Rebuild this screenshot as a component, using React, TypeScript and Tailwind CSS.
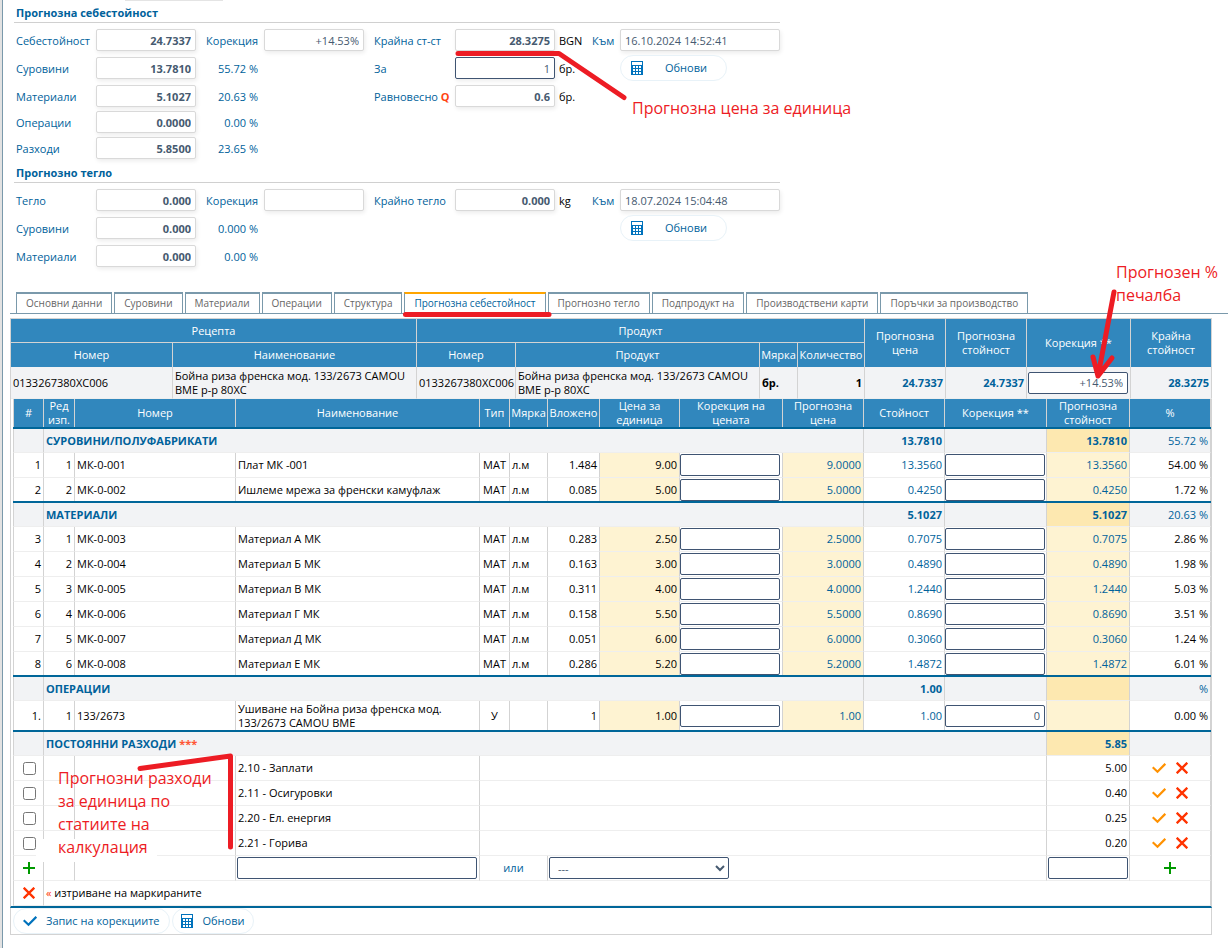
import React from "react";

const INK = "text-[#00629b]";

function CalcIcon() {
  return (
    <svg width="12" height="14" viewBox="0 0 12 14" shapeRendering="crispEdges" aria-hidden="true" className="shrink-0">
      <path fill="#0072bc" d="M0 0h12v14H0z" />
      <path fill="#fff" d="M1 1h10v3H1zM2 5h2v2H2zM5 5h2v2H5zM8 5h2v2H8zM2 8h2v2H2zM5 8h2v2H5zM8 8h2v2H8zM2 11h2v2H2zM5 11h2v2H5zM8 11h2v2H8z" />
    </svg>
  );
}

function CheckIcon({ color }: { color: string }) {
  return (
    <svg width="14" height="12" viewBox="0 0 14 12" aria-hidden="true" className="shrink-0">
      <path d="M.7 5.2 5.5 9.700 13.300 1.900" fill="none" stroke={color} strokeWidth="2.2" />
    </svg>
  );
}

function CrossIcon() {
  return (
    <svg width="12" height="12" viewBox="0 0 12 12" aria-hidden="true">
      <path d="M.7.7 11.3 11.3M11.3.7.7 11.3" fill="none" stroke="#ff3300" strokeWidth="2.3" />
    </svg>
  );
}

function PlusIcon() {
  return (
    <svg width="12" height="12" viewBox="0 0 12 12" aria-hidden="true">
      <path d="M6 0v12M0 6h12" fill="none" stroke="#009900" strokeWidth="2" />
    </svg>
  );
}

type FieldProps = { id: string; value?: string; bold?: boolean; strong?: boolean; left?: boolean };

function Field({ id, value = "", bold, strong, left }: FieldProps) {
  return (
    <input
      id={id}
      defaultValue={value}
      className={`block h-[22px] w-full rounded-[2px] border bg-white px-1 text-[#465a70] shadow-[1px_2px_4px_rgba(0,0,0,0.08)] ${
        strong ? "border-[#3f5472]" : "border-[#d9d9d9]"
      } ${bold ? "font-bold" : ""} ${left ? "text-left" : "text-right"}`}
    />
  );
}

function RefreshButton() {
  return (
    <button
      type="button"
      className={`flex h-[26px] w-[107px] items-center gap-[22px] rounded-full border border-[#e8f2f8] bg-white px-2.5 leading-[14px] ${INK}`}
    >
      <CalcIcon />
      Обнови
    </button>
  );
}

const FORM_ROW =
  "grid h-[22px] grid-cols-[80px_100px_68px_100px_91px_100px_37px_28px_160px] grid-rows-[22px] items-center text-[#00629b]";

type FormRowProps = {
  id: string;
  label: string;
  value: string;
  pct?: string;
  children?: React.ReactNode;
};

function FormRow({ id, label, value, pct, children }: FormRowProps) {
  return (
    <div className={FORM_ROW}>
      <label htmlFor={id}>{label}</label>
      <Field id={id} value={value} bold />
      {pct !== undefined && <span className="pr-1.5 text-right">{pct}</span>}
      {children}
    </div>
  );
}

function SectionTitle({ children }: { children: React.ReactNode }) {
  return <h2 className="h-[19px] w-[766px] border-b border-[#d0d0d0] pl-0.5 leading-[17px] font-bold text-[#00629b]">{children}</h2>;
}

const TABS = [
  "Основни данни",
  "Суровини",
  "Материали",
  "Операции",
  "Структура",
  "Прогнозна себестойност",
  "Прогнозно тегло",
  "Подпродукт на",
  "Производствени карти",
  "Поръчки за производство",
];

const TH = "border-r border-[#d3d3d3] bg-[#3187bd] p-0 text-center font-medium text-white";
const TD = "border-r border-b border-r-[#d3d3d3] border-b-[#eeeeee] p-0 px-0.5";
const TD_END = "border-r border-r-[#d3d3d3] p-0 px-0.5";
const TD_FIRST = "border-l border-l-[#d3d3d3]";

function Rule() {
  return (
    <tr aria-hidden="true">
      <td colSpan={14} className="h-0.5 bg-[#006699] p-0" />
    </tr>
  );
}

function Blank({ label, value = "" }: { label: string; value?: string }) {
  return (
    <input
      aria-label={label}
      defaultValue={value}
      className="block h-[22px] w-[100px] rounded-[2px] border border-[#3f5472] bg-white px-1 text-right text-[#465a70]"
    />
  );
}

type Item = {
  n: string;
  row: string;
  code: string;
  name: string;
  kind: string;
  unit: string;
  qty: string;
  price: string;
  forecast: string;
  cost: string;
  corr?: string;
  total: string;
  pct: string;
};

const mat = (n: string, row: string, code: string, name: string, qty: string, price: string, cost: string, pct: string): Item => ({
  n,
  row,
  code,
  name,
  kind: "МАТ",
  unit: "л.м",
  qty,
  price,
  forecast: price + "00",
  cost,
  total: cost,
  pct,
});

const RAW: Item[] = [
  mat("1", "1", "МК-0-001", "Плат МК -001", "1.484", "9.00", "13.3560", "54.00 %"),
  mat("2", "2", "МК-0-002", "Ишлеме мрежа за френски камуфлаж", "0.085", "5.00", "0.4250", "1.72 %"),
];

const MATERIALS: Item[] = [
  mat("3", "1", "МК-0-003", "Материал А МК", "0.283", "2.50", "0.7075", "2.86 %"),
  mat("4", "2", "МК-0-004", "Материал Б МК", "0.163", "3.00", "0.4890", "1.98 %"),
  mat("5", "3", "МК-0-005", "Материал В МК", "0.311", "4.00", "1.2440", "5.03 %"),
  mat("6", "4", "МК-0-006", "Материал Г МК", "0.158", "5.50", "0.8690", "3.51 %"),
  mat("7", "5", "МК-0-007", "Материал Д МК", "0.051", "6.00", "0.3060", "1.24 %"),
  mat("8", "6", "МК-0-008", "Материал Е МК", "0.286", "5.20", "1.4872", "6.01 %"),
];

const OPERATIONS: Item[] = [
  {
    n: "1.",
    row: "1",
    code: "133/2673",
    name: "Ушиване на Бойна риза френска мод. 133/2673 CAMOU BME",
    kind: "У",
    unit: "",
    qty: "1",
    price: "1.00",
    forecast: "1.00",
    cost: "1.00",
    corr: "0",
    total: "",
    pct: "0.00 %",
  },
];

const EXPENSES = [
  ["2.10 - Заплати", "5.00"],
  ["2.11 - Осигуровки", "0.40"],
  ["2.20 - Ел. енергия", "0.25"],
  ["2.21 - Горива", "0.20"],
];

type GroupProps = { title: string; cost: string; total: string; pct: string; items: Item[]; tall?: boolean };

function Group({ title, cost, total, pct, items, tall }: GroupProps) {
  return (
    <tbody>
      <tr className="h-6 bg-[#f2f3f5] text-[#00629b]">
        <td className={`${TD_FIRST} ${TD}`} />
        <th colSpan={9} scope="rowgroup" className={`${TD} text-left font-bold`}>
          {title}
        </th>
        <td className={`${TD} text-right font-bold`}>{cost}</td>
        <td className={TD} />
        <td className={`${TD} bg-[#fde8b0] text-right font-bold`}>{total}</td>
        <td className={`${TD} text-right`}>{pct}</td>
      </tr>
      {items.map((it, i) => {
        const last = i === items.length - 1;
        const c = last ? TD_END : TD;
        return (
          <tr key={it.n} className={tall ? "h-[29px]" : last ? "h-[23px]" : "h-[25px]"}>
            <td className={`${TD_FIRST} ${c} text-right`}>{it.n}</td>
            <td className={`${c} text-right`}>{it.row}</td>
            <td className={c}>{it.code}</td>
            <td className={c}>{it.name}</td>
            <td className={`${c} text-center`}>{it.kind}</td>
            <td className={c}>{it.unit}</td>
            <td className={`${c} text-right`}>{it.qty}</td>
            <td className={`${c} bg-[#fef3d2] text-right`}>{it.price}</td>
            <td className={`${c} pl-0`}>
              <Blank label={`Корекция на цената ${it.code}`} />
            </td>
            <td className={`${c} bg-[#fef3d2] text-right text-[#00629b]`}>{it.forecast}</td>
            <td className={`${c} text-right text-[#00629b]`}>{it.cost}</td>
            <td className={`${c} pl-0`}>
              <Blank label={`Корекция ${it.code}`} value={it.corr} />
            </td>
            <td className={`${c} bg-[#fef3d2] text-right text-[#00629b]`}>{it.total}</td>
            <td className={`${c} text-right`}>{it.pct}</td>
          </tr>
        );
      })}
      <Rule />
    </tbody>
  );
}

function SummaryTable() {
  const line = "border-b border-b-[#d3d3d3]";
  return (
    <table className="w-full table-fixed border-separate border-spacing-0 border-t border-l border-[#d3d3d3] leading-[14px]">
      <colgroup>
        <col className="w-[162px]" />
        <col />
        <col className="w-[99px]" />
        <col />
        <col className="w-[38px]" />
        <col className="w-[67px]" />
        <col className="w-[81px]" />
        <col className="w-[81px]" />
        <col className="w-[104px]" />
        <col className="w-[81px]" />
      </colgroup>
      <thead>
        <tr className="h-6">
          <th colSpan={2} className={`${TH} ${line}`}>Рецепта</th>
          <th colSpan={4} className={`${TH} ${line}`}>Продукт</th>
          <th rowSpan={2} className={TH}>Прогнозна цена</th>
          <th rowSpan={2} className={TH}>Прогнозна стойност</th>
          <th rowSpan={2} className={TH}>Корекция **</th>
          <th rowSpan={2} className={TH}>Крайна стойност</th>
        </tr>
        <tr className="h-6">
          <th className={TH}>Номер</th>
          <th className={TH}>Наименование</th>
          <th className={TH}>Номер</th>
          <th className={TH}>Продукт</th>
          <th className={TH}>Мярка</th>
          <th className={TH}>Количество</th>
        </tr>
      </thead>
      <tbody>
        <tr className="h-8 bg-[#f2f3f5]">
          <td className={`${TD} ${line}`}>0133267380XC006</td>
          <td className={`${TD} ${line}`}>Бойна риза френска мод. 133/2673 CAMOU BME р-р 80XC</td>
          <td className={`${TD} ${line}`}>0133267380XC006</td>
          <td className={`${TD} ${line}`}>Бойна риза френска мод. 133/2673 CAMOU BME р-р 80XC</td>
          <td className={`${TD} ${line} font-bold`}>бр.</td>
          <td className={`${TD} ${line} text-right font-bold`}>1</td>
          <td className={`${TD} ${line} text-right font-bold text-[#00629b]`}>24.7337</td>
          <td className={`${TD} ${line} text-right font-bold text-[#00629b]`}>24.7337</td>
          <td className={`${TD} ${line} pl-px`}>
            <Blank label="Корекция" value="+14.53%" />
          </td>
          <td className={`${TD} ${line} text-right font-bold text-[#00629b]`}>28.3275</td>
        </tr>
      </tbody>
    </table>
  );
}

const HEADS = [
  "#",
  "Ред изп.",
  "Номер",
  "Наименование",
  "Тип",
  "Мярка",
  "Вложено",
  "Цена за единица",
  "Корекция на цената",
  "Прогнозна цена",
  "Стойност",
  "Корекция **",
  "Прогнозна стойност",
  "%",
];

function DetailTable() {
  return (
    <table className="w-full table-fixed border-separate border-spacing-0 leading-[14px]">
      <colgroup>
        <col className="w-[31px]" />
        <col className="w-[31px]" />
        <col className="w-[161px]" />
        <col />
        <col className="w-[30px]" />
        <col className="w-[38px]" />
        <col className="w-[52px]" />
        <col className="w-[80px]" />
        <col className="w-[103px]" />
        <col className="w-[81px]" />
        <col className="w-[81px]" />
        <col className="w-[102px]" />
        <col className="w-[83px]" />
        <col className="w-[81px]" />
      </colgroup>
      <thead>
        <tr className="h-7">
          {HEADS.map((h, i) => (
            <th key={i} scope="col" className={`${TH} ${i === 0 ? "border-l" : ""}`}>
              {h}
            </th>
          ))}
        </tr>
        <Rule />
      </thead>
      <Group title="СУРОВИНИ/ПОЛУФАБРИКАТИ" cost="13.7810" total="13.7810" pct="55.72 %" items={RAW} />
      <Group title="МАТЕРИАЛИ" cost="5.1027" total="5.1027" pct="20.63 %" items={MATERIALS} />
      <Group title="ОПЕРАЦИИ" cost="1.00" total="" pct="%" items={OPERATIONS} tall />
      <tbody>
        <tr className="h-6 bg-[#f2f3f5] text-[#00629b]">
          <td className={`${TD_FIRST} ${TD}`} />
          <th colSpan={11} scope="rowgroup" className={`${TD} text-left font-bold`}>
            ПОСТОЯННИ РАЗХОДИ <span className="text-[#ff5533]">***</span>
          </th>
          <td className={`${TD} bg-[#fde8b0] text-right font-bold`}>5.85</td>
          <td className={TD} />
        </tr>
        {EXPENSES.map(([name, sum]) => (
          <tr key={name} className="h-[25px]">
            <td className={`${TD_FIRST} ${TD} pl-1`}>
              <input type="checkbox" aria-label={name} className="mx-auto block size-[13px]" />
            </td>
            <td className={TD} />
            <td className={TD} />
            <td className={TD}>{name}</td>
            <td colSpan={8} className={TD} />
            <td className={`${TD} text-right`}>{sum}</td>
            <td className={TD}>
              <div className="flex items-center justify-center gap-2.5">
                <button type="button" aria-label={`Запис ${name}`}>
                  <CheckIcon color="#ff9100" />
                </button>
                <button type="button" aria-label={`Изтриване ${name}`}>
                  <CrossIcon />
                </button>
              </div>
            </td>
          </tr>
        ))}
        <tr className="h-[25px]">
          <td className={`${TD_FIRST} ${TD}`}>
            <button type="button" aria-label="Добавяне" className="mx-auto block">
              <PlusIcon />
            </button>
          </td>
          <td className={TD} />
          <td className={TD} />
          <td className={`${TD} px-px`}>
            <input aria-label="Нов разход" className="block h-[22px] w-[240px] rounded-[2px] border border-[#3f5472] bg-white px-1" />
          </td>
          <td colSpan={2} className={`${TD} text-center text-[#00629b]`}>
            или
          </td>
          <td colSpan={6} className={`${TD} pl-px`}>
            <select aria-label="Разход" className="block h-[22px] w-[180px] rounded-[2px] border border-[#3f5472] bg-white px-1 text-[#465a70]">
              <option>---</option>
            </select>
          </td>
          <td className={`${TD} px-px`}>
            <input aria-label="Сума" className="block h-[22px] w-[80px] rounded-[2px] border border-[#3f5472] bg-white px-1 text-right" />
          </td>
          <td className={TD}>
            <button type="button" aria-label="Добавяне на разход" className="mx-auto block">
              <PlusIcon />
            </button>
          </td>
        </tr>
        <tr className="h-[25px]">
          <td className={`${TD_FIRST} ${TD}`}>
            <button type="button" aria-label="Изтриване" className="mx-auto block">
              <CrossIcon />
            </button>
          </td>
          <td colSpan={13} className={TD}>
            <span className="text-[#ff3300]">«</span> изтриване на маркираните
          </td>
        </tr>
      </tbody>
    </table>
  );
}

function Notes() {
  const note = "absolute text-[16px] leading-[23px] whitespace-nowrap text-[#ed1c24]";
  return (
    <div className="pointer-events-none">
      <p className={`${note} top-[97px] left-[632px]`}>Прогнозна цена за единица</p>
      <p className={`${note} top-[261px] left-[1116px]`}>
        Прогнозен %<br />
        печалба
      </p>
      <div className="absolute top-[839px] left-[36px] h-[23px] w-[121px] bg-white" />
      <p className={`${note} top-[767px] left-[58px]`}>
        Прогнозни разходи
        <br />
        за единица по
        <br />
        статиите на
        <br />
        калкулация
      </p>
      <svg
        width="1228"
        height="948"
        viewBox="0 0 1228 948"
        className="absolute top-0 left-0"
        fill="none"
        stroke="#ed1c24"
        strokeWidth="5"
        strokeLinecap="round"
        strokeLinejoin="round"
        aria-hidden="true"
      >
        <path d="M458 53.500H559L624 97.500" />
        <path d="M405.500 314.500H549" />
        <path d="M1114 292 1098 376M1093 357 1098 376 1112 358" />
        <path d="M140 768.500 230.500 756V847" />
      </svg>
    </div>
  );
}

export default function App() {
  return (
    <div className="relative min-h-screen overflow-hidden bg-white font-['Open_Sans','Noto_Sans',sans-serif] text-[11px] leading-[15px] text-black">
      <div className="min-h-screen border-l-2 border-[#e2e2e2]">
        <div className="min-h-screen border-l border-[#7a99ab] pl-[7px]">
          <div className="ml-[115px] h-px w-[98px] bg-[#e4e4e4]" />
          <form className="pl-1" onSubmit={(e) => e.preventDefault()}>
            <div className="pt-[3px]">
              <SectionTitle>Прогнозна себестойност</SectionTitle>
            </div>
            <div className="flex flex-col gap-1 pt-1.5 pl-0.5">
              <div className="flex flex-col gap-1.5">
                <div className={FORM_ROW}>
                  <label htmlFor="cost">Себестойност</label>
                  <Field id="cost" value="24.7337" bold />
                  <label htmlFor="corr" className="pr-1.5 text-right">Корекция</label>
                  <Field id="corr" value="+14.53%" />
                  <label htmlFor="final" className="pl-2.5">Крайна ст-ст</label>
                  <Field id="final" value="28.3275" bold />
                  <span className="pl-1 text-black">BGN</span>
                  <label htmlFor="date">Към</label>
                  <Field id="date" value="16.10.2024 14:52:41" left />
                </div>
                <FormRow id="raw" label="Суровини" value="13.7810" pct="55.72 %">
                  <label htmlFor="per" className="col-start-5 pl-2.5">За</label>
                  <Field id="per" value="1" strong />
                  <span className="pl-1 text-black">бр.</span>
                  <div className="col-start-9">
                    <RefreshButton />
                  </div>
                </FormRow>
                <FormRow id="materials" label="Материали" value="5.1027" pct="20.63 %">
                  <label htmlFor="even" className="col-start-5 pl-2.5">
                    Равновесно <b className="text-[#ff4411]">Q</b>
                  </label>
                  <Field id="even" value="0.6" bold />
                  <span className="pl-1 text-black">бр.</span>
                </FormRow>
              </div>
              <FormRow id="operations" label="Операции" value="0.0000" pct="0.00 %" />
              <FormRow id="expenses" label="Разходи" value="5.8500" pct="23.65 %" />
            </div>
            <div className="pt-[5px]">
              <SectionTitle>Прогнозно тегло</SectionTitle>
            </div>
            <div className="flex flex-col gap-1.5 pt-1.5 pl-0.5">
              <div className={FORM_ROW}>
                <label htmlFor="weight">Тегло</label>
                <Field id="weight" value="0.000" bold />
                <label htmlFor="wcorr" className="pr-1.5 text-right">Корекция</label>
                <Field id="wcorr" />
                <label htmlFor="wfinal" className="pl-2.5">Крайно тегло</label>
                <Field id="wfinal" value="0.000" bold />
                <span className="pl-1 text-black">kg</span>
                <label htmlFor="wdate">Към</label>
                <Field id="wdate" value="18.07.2024 15:04:48" left />
              </div>
              <FormRow id="wraw" label="Суровини" value="0.000" pct="0.000 %">
                <div className="col-start-9">
                  <RefreshButton />
                </div>
              </FormRow>
              <FormRow id="wmaterials" label="Материали" value="0.000" pct="0.00 %" />
            </div>
          </form>

          <nav className="mt-[25px] flex gap-0.5 border-b border-[#7a99ab] pl-1.5 text-[10px]">
            {TABS.map((t) => {
              const on = t === "Прогнозна себестойност";
              return (
                <a
                  key={t}
                  href="#"
                  className={`h-[21px] border-x border-t-2 border-x-[#7a99ab] px-[9px] leading-[18px] whitespace-nowrap ${
                    on ? "border-t-[#ffa500] text-[#00629b]" : "border-t-[#7a99ab] text-[#666666]"
                  }`}
                >
                  {t}
                </a>
              );
            })}
          </nav>

          <main className="mt-1 mr-4">
            <SummaryTable />
            <div className="border-r border-b-2 border-l border-r-[#d3d3d3] border-b-[#006699] border-l-[#d3d3d3] pl-0.5">
              <DetailTable />
            </div>
            <div className="flex h-[27px] gap-0.5 border-x border-b border-[#d3d3d3] pl-0.5 leading-[14px]">
              <button type="button" className={`flex h-[26px] items-center gap-[9px] rounded-full border border-[#e8f2f8] px-[9px] ${INK}`}>
                <CheckIcon color="#0072bc" />
                Запис на корекциите
              </button>
              <button type="button" className={`flex h-[26px] items-center gap-2.5 rounded-full border border-[#e8f2f8] px-2 ${INK}`}>
                <CalcIcon />
                Обнови
              </button>
            </div>
          </main>
        </div>
      </div>
      <Notes />
    </div>
  );
}
